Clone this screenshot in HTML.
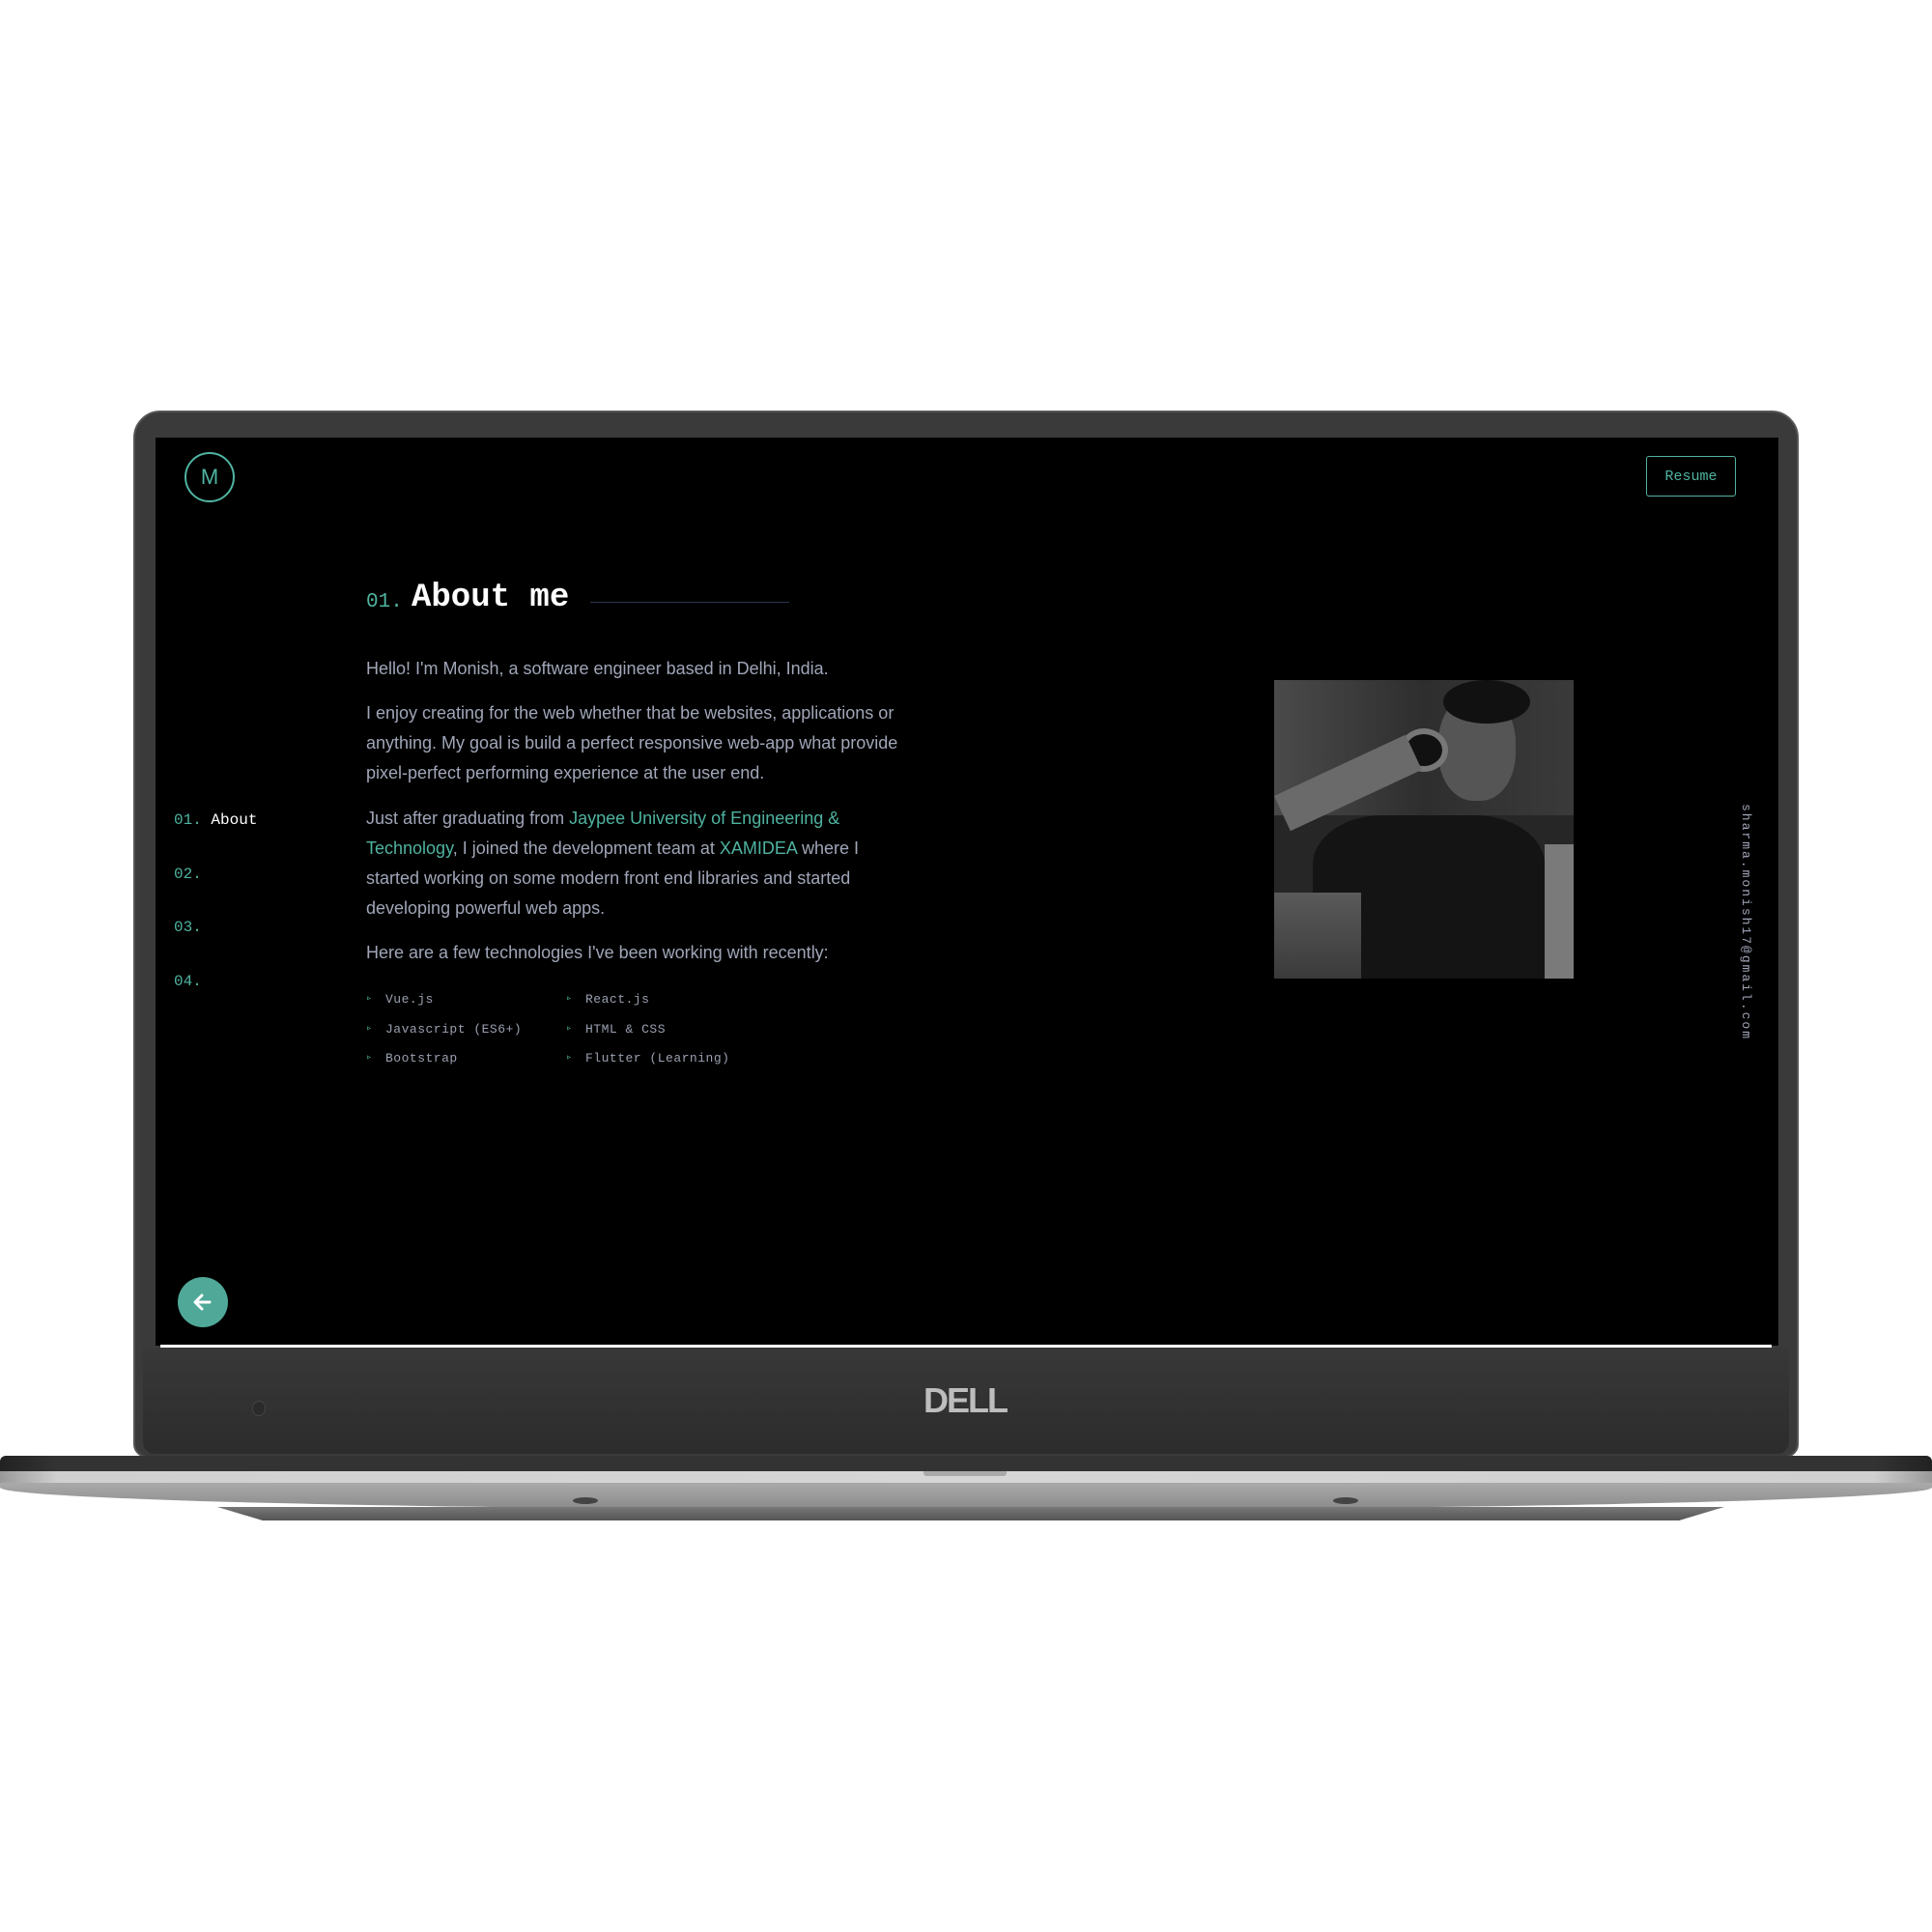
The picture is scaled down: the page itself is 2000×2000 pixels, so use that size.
<!DOCTYPE html>
<html><head><meta charset="utf-8"><style>
*{margin:0;padding:0;box-sizing:border-box}
body{width:2000px;height:2000px;background:#fff;position:relative;overflow:hidden;font-family:"Liberation Sans",sans-serif}
.a{position:absolute}
.mono{font-family:"Liberation Mono",monospace}
.p{position:absolute;left:379px;color:#a0a6b8;font-size:18px;line-height:31px}
.g{color:#4fb3a0}
.li{position:absolute;font-family:"Liberation Mono",monospace;font-size:13px;color:#9aa0b0;letter-spacing:0.5px}
.li:before{content:"▹";color:#4fb3a0;font-size:10px;position:absolute;left:-20px;top:1px}
</style></head><body>
<div class="a" style="left:138px;top:425px;width:1724px;height:1084px;background:#3a3a3a;border-radius:28px 28px 14px 14px;border:2px solid #555"></div>
<div class="a" style="left:148px;top:1395px;width:1704px;height:110px;background:linear-gradient(#383838,#2c2c2c);border-radius:0 0 12px 12px"></div>
<div class="a" style="left:161px;top:453px;width:1680px;height:940px;background:#000"></div>
<div class="a" style="left:166px;top:1392px;width:1668px;height:3px;background:#fff"></div>
<div class="a" style="left:261px;top:1450px;width:14px;height:16px;border-radius:50%;background:#2a2a2a;border:1px solid #444"></div>
<div class="a" style="left:947px;top:1432px;width:104px;height:36px;color:#bdbdbd;font:bold 36px/36px 'Liberation Sans',sans-serif;letter-spacing:-2px;text-align:center">DELL</div>
<div class="a" style="left:0;top:1507px;width:2000px;height:16px;background:linear-gradient(90deg,#222,#333 3%,#333 97%,#222);border-radius:6px 6px 0 0"></div>
<div class="a" style="left:0;top:1523px;width:2000px;height:12px;background:linear-gradient(90deg,#999,#d0d0d0 3%,#d6d6d6 50%,#d0d0d0 97%,#999)"></div>
<div class="a" style="left:0;top:1535px;width:2000px;height:28px;background:linear-gradient(#aaa,#8a8a8a);border-radius:0 0 60% 60%/0 0 100% 100%"></div>
<div class="a" style="left:225px;top:1560px;width:1560px;height:14px;background:linear-gradient(#777,#555);clip-path:polygon(0 0,100% 0,97% 100%,3% 100%)"></div>
<div class="a" style="left:956px;top:1523px;width:86px;height:5px;background:#aaa;border-radius:0 0 3px 3px"></div>
<div class="a" style="left:593px;top:1550px;width:26px;height:7px;border-radius:50%;background:#444"></div>
<div class="a" style="left:1380px;top:1550px;width:26px;height:7px;border-radius:50%;background:#444"></div>
<div class="a" style="left:191px;top:468px;width:52px;height:52px;border:2px solid #4fb3a0;border-radius:50%;color:#4fb3a0;font-size:22px;line-height:48px;text-align:center">M</div>
<div class="a mono" style="left:1704px;top:472px;width:93px;height:42px;border:1.5px solid #4fb3a0;border-radius:3px;color:#4fb3a0;font-size:15px;line-height:41px;text-align:center">Resume</div>
<div class="a mono g" style="left:379px;top:612px;font-size:21px">01.</div>
<div class="a mono" style="left:426px;top:600px;font-size:34px;color:#fff;font-weight:bold">About me</div>
<div class="a" style="left:611px;top:623px;width:206px;height:1px;background:#2a3550"></div>
<div class="p" style="top:677px">Hello! I'm Monish, a software engineer based in Delhi, India.</div>
<div class="p" style="top:723px;width:560px">I enjoy creating for the web whether that be websites, applications or anything. My goal is build a perfect responsive web-app what provide pixel-perfect performing experience at the user end.</div>
<div class="p" style="top:832px;width:540px">Just after graduating from <span class="g">Jaypee University of Engineering &amp; Technology</span>, I joined the development team at <span class="g">XAMIDEA</span> where I started working on some modern front end libraries and started developing powerful web apps.</div>
<div class="p" style="top:971px">Here are a few technologies I've been working with recently:</div>
<div class="li" style="left:399px;top:1027px">Vue.js</div>
<div class="li" style="left:399px;top:1058px">Javascript (ES6+)</div>
<div class="li" style="left:399px;top:1088px">Bootstrap</div>
<div class="li" style="left:606px;top:1027px">React.js</div>
<div class="li" style="left:606px;top:1058px">HTML &amp; CSS</div>
<div class="li" style="left:606px;top:1088px">Flutter (Learning)</div>
<div class="a mono" style="left:180px;top:840px;font-size:16px"><span class="g">01.</span> <span style="color:#fff">About</span></div>
<div class="a mono g" style="left:180px;top:896px;font-size:16px">02.</div>
<div class="a mono g" style="left:180px;top:951px;font-size:16px">03.</div>
<div class="a mono g" style="left:180px;top:1007px;font-size:16px">04.</div>
<div class="a" style="left:1319px;top:704px;width:310px;height:309px;background:#262626;overflow:hidden">
<div class="a" style="left:0;top:0;width:310px;height:140px;background:linear-gradient(90deg,#4a4a4a,#2e2e2e 50%,#3a3a3a)"></div>
<div class="a" style="left:170px;top:15px;width:80px;height:110px;border-radius:45%;background:#555"></div>
<div class="a" style="left:175px;top:0;width:90px;height:45px;border-radius:50%;background:#111"></div>
<div class="a" style="left:130px;top:50px;width:50px;height:45px;border-radius:50%;background:#111;border:6px solid #777"></div>
<div class="a" style="left:0;top:60px;width:150px;height:40px;background:#6a6a6a;transform:rotate(-25deg);transform-origin:0 0;top:120px"></div>
<div class="a" style="left:40px;top:140px;width:240px;height:170px;background:#141414;border-radius:30% 30% 0 0"></div>
<div class="a" style="left:0;top:220px;width:90px;height:90px;background:linear-gradient(#5a5a5a,#3a3a3a)"></div>
<div class="a" style="left:280px;top:170px;width:30px;height:140px;background:#7a7a7a"></div>
</div>
<div class="a mono" style="left:1789px;top:832px;width:26px;height:245px;writing-mode:vertical-rl;color:#a0a6b8;font-size:13px;letter-spacing:2px">sharma.monish17@gmail.com</div>
<div class="a" style="left:184px;top:1322px;width:52px;height:52px;border-radius:50%;background:#4fa898">
<svg width="52" height="52" viewBox="0 0 52 52"><path d="M33 26H19M25 19l-7 7 7 7" stroke="#fff" stroke-width="3" fill="none" stroke-linecap="round" stroke-linejoin="round"/></svg></div>
</body></html>
